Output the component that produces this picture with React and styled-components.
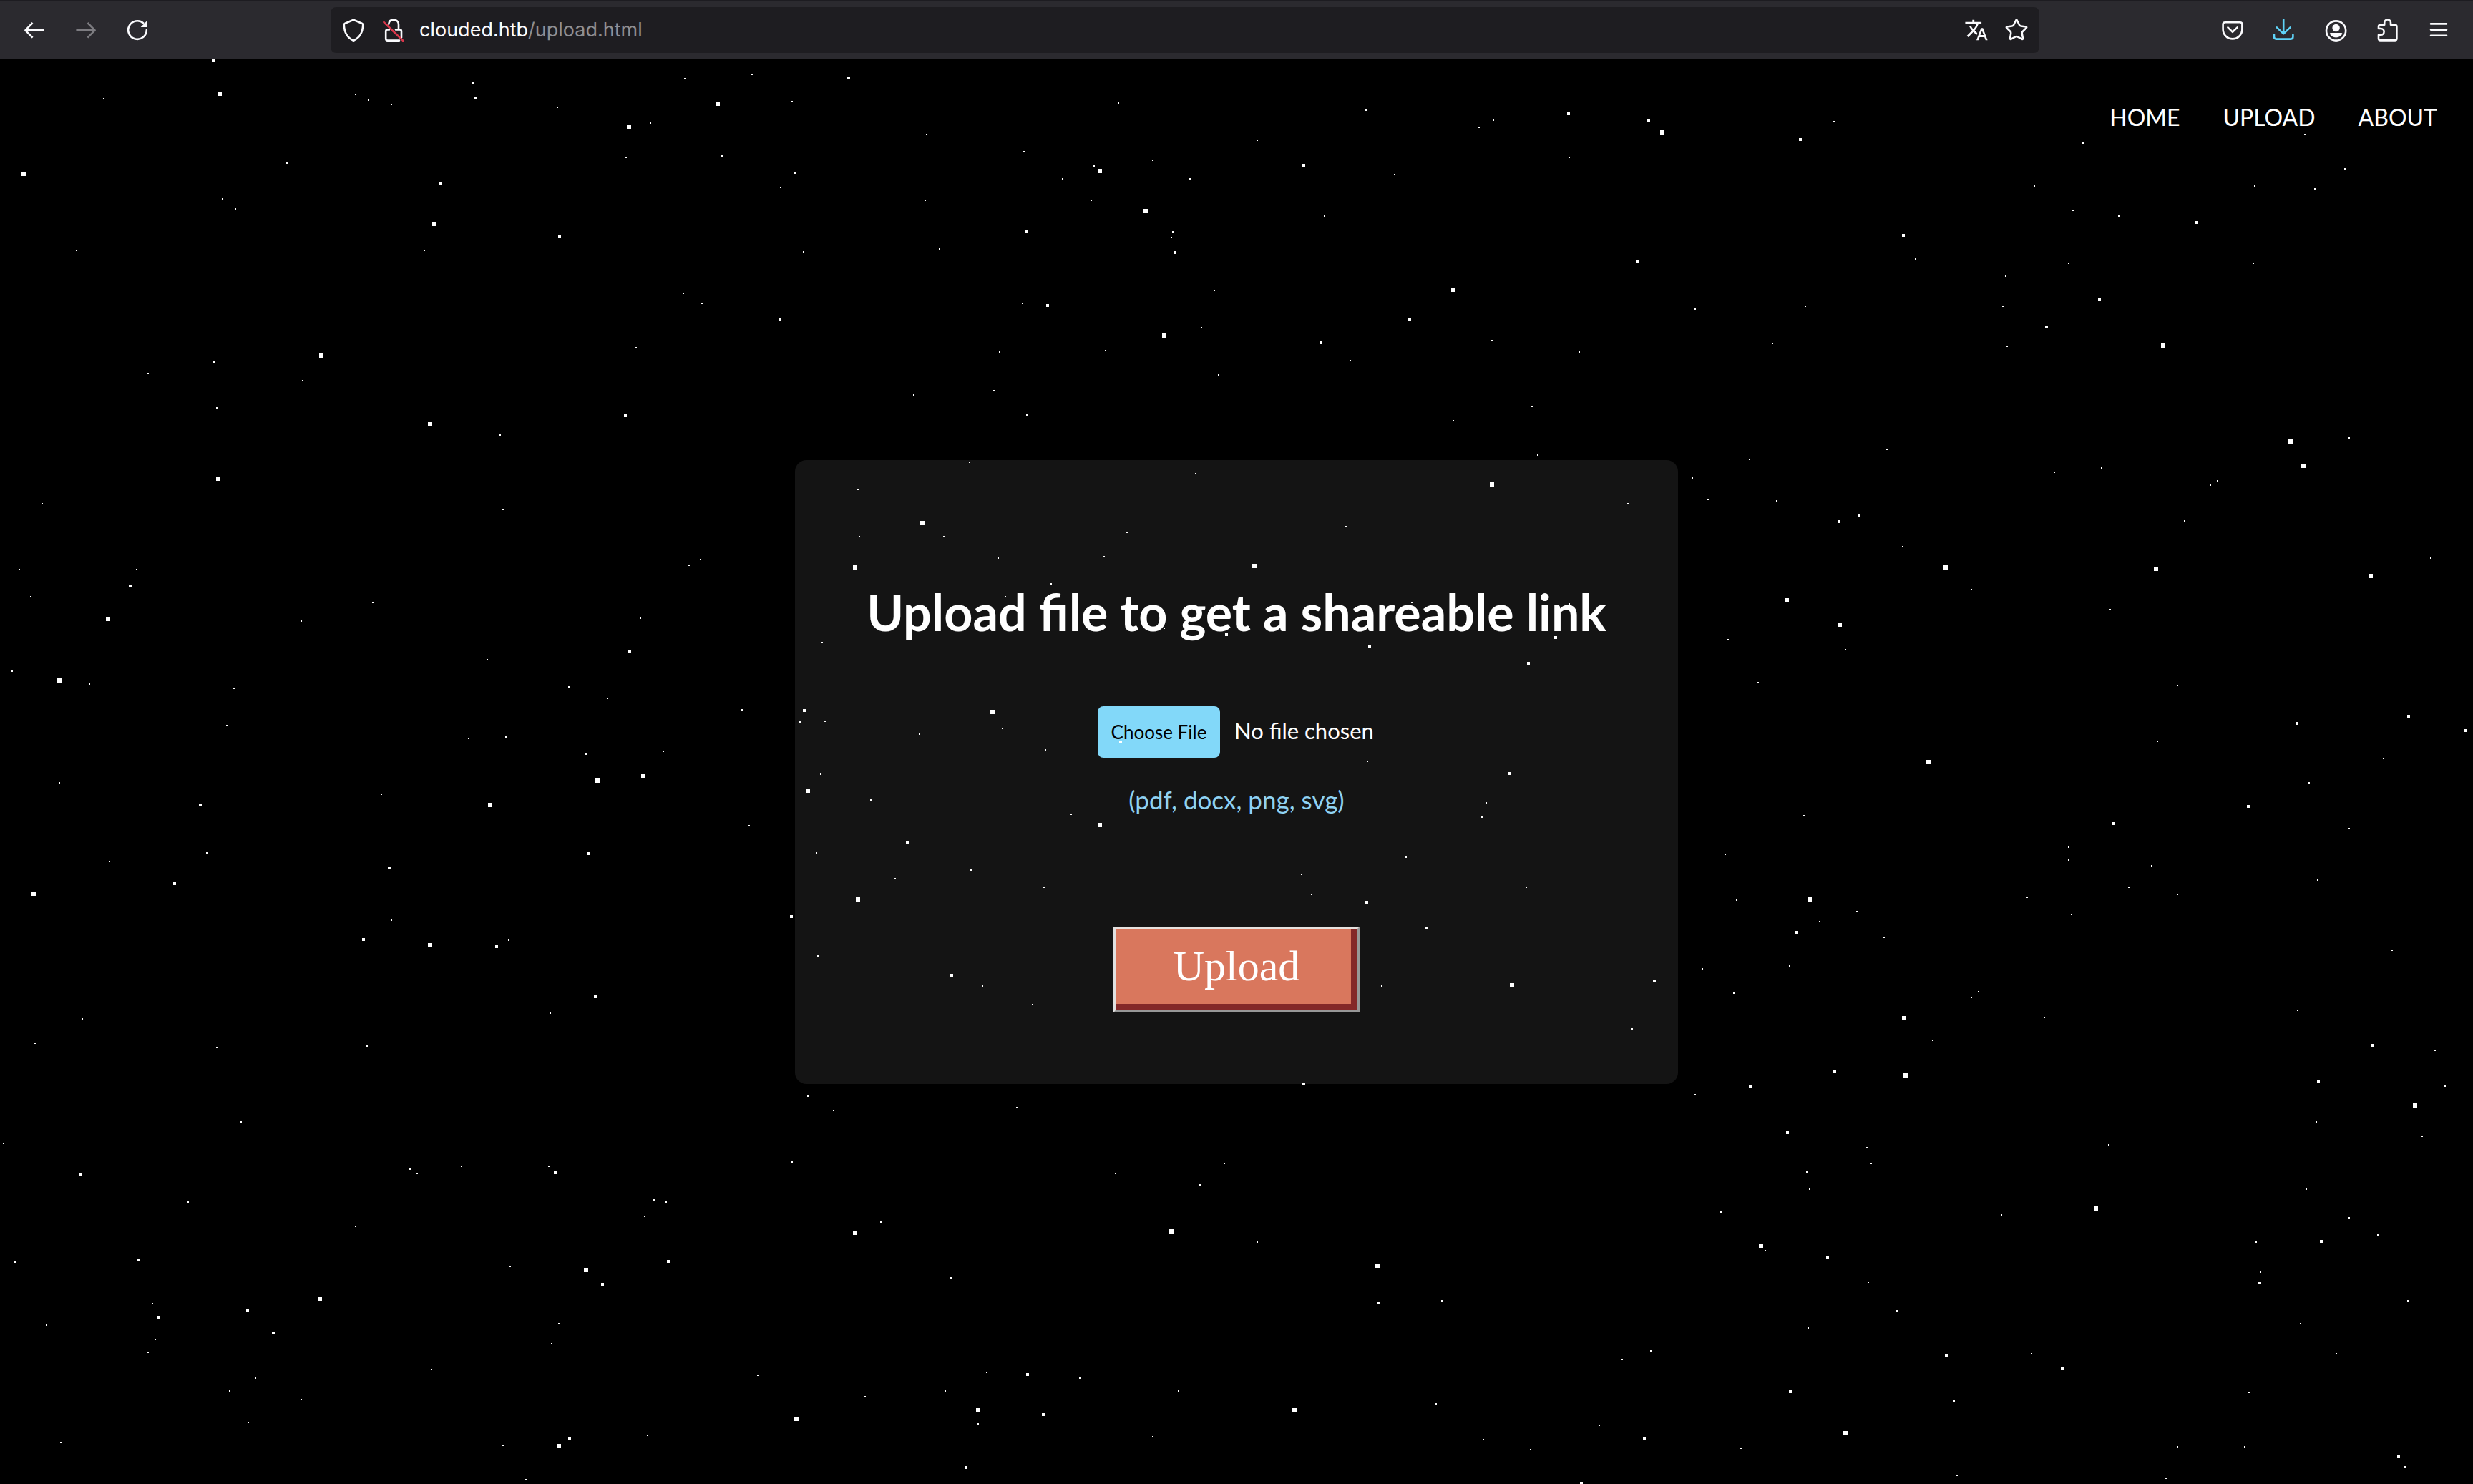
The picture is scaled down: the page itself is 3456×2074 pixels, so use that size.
import React from "react";
import styled, { createGlobalStyle } from "styled-components";
import { Star } from "lucide-react";
import { MdTranslate } from "react-icons/md";

const GlobalStyle = createGlobalStyle`
  *, *::before, *::after { box-sizing: border-box; }
  body {
    margin: 0;
    background: #000;
    color: #fff;
    font-family: Lato, "Liberation Sans", sans-serif;
  }
`;

const Screen = styled.div`
  position: relative;
  display: flex;
  flex-direction: column;
  min-height: 100vh;
`;

/* ---------- browser chrome ---------- */

const Toolbar = styled.header`
  display: flex;
  align-items: center;
  height: 83px;
  padding: 0 12px;
  background: #2b2a2f;
  border-top: 2px solid #1d1c21;
  border-bottom: 1px solid #111113;
`;

const ToolGroup = styled.div`
  display: flex;
  align-items: center;
`;

const IconButton = styled.button`
  display: flex;
  align-items: center;
  justify-content: center;
  width: ${(p) => (p.$compact ? 56 : 72)}px;
  height: 64px;
  padding: 0;
  border: 0;
  background: none;
  color: ${(p) => p.$color || "#fbfbfe"};
`;

const AddressBar = styled.div`
  flex: 1;
  display: flex;
  align-items: center;
  height: 64px;
  margin: 0 234px;
  padding: 0 4px;
  border-radius: 8px;
  background: #1e1d21;
`;

const Address = styled.div`
  flex: 1;
  padding-left: 8px;
  font-family: Inter, Roboto, sans-serif;
  font-size: 27px;
  line-height: 32px;
  color: #8f8f93;
`;

const Host = styled.span`
  color: #fbfbfe;
`;

const Glyph = styled.svg`
  width: 32px;
  height: 32px;
  overflow: visible;
  fill: none;
  stroke: currentColor;
  stroke-width: 1.3;
  stroke-linecap: round;
  stroke-linejoin: round;
`;

const Icon = ({ children }) => (
  <Glyph viewBox="0 0 16 16" aria-hidden="true">
    {children}
  </Glyph>
);

const BackIcon = () => (
  <Icon>
    <path d="M14.8 8.2H1.9M6.8 3L1.7 8.2l5.1 5.1" strokeLinecap="butt" />
  </Icon>
);
const ForwardIcon = () => (
  <Icon>
    <path d="M1.2 8.2h12.9M9.2 3l5.1 5.2-5.1 5.1" strokeLinecap="butt" />
  </Icon>
);
const ReloadIcon = () => (
  <Icon>
    <path d="M14.4 8A6.4 6.4 0 1 1 12.2 3.2" />
    <path d="M15 1.3V6h-4.7z" fill="currentColor" stroke="none" />
  </Icon>
);
const ShieldIcon = () => (
  <Icon>
    <path d="M8 .9l5.9 2.5q.7.3.7 1c-.1 4.8-2.2 9-6.6 11C3.6 13.4 1.5 9.2 1.4 4.4q0-.7.7-1z" />
  </Icon>
);
const InsecureIcon = () => (
  <Icon>
    <path d="M4.600 3.800C4.800 1.900 6.200.8 8 .8c2 0 3.500 1.400 3.500 3.400v3.500M9.500 7.700h2.800q1.200 0 1.200 1.200v4.400M5 7.700H3.800q-1.200 0-1.200 1.200v5.200q0 1.200 1.200 1.200H12" />
    <path d="M1.200 2.500l13.600 13.100" stroke="#d9374b" />
  </Icon>
);
const PocketIcon = () => (
  <Icon>
    <path d="M2.800 2.600h10.400q1.500 0 1.500 1.500v3.400a6.700 6.700 0 0 1-13.400 0V4.100q0-1.500 1.500-1.500z" />
    <path d="M4.700 6.200L8 9.400l3.300-3.200" />
  </Icon>
);
const DownloadIcon = () => (
  <Icon>
    <path d="M7.600.6v9.900M2.900 6.200l4.700 4.400 4.700-4.400M1 11.300v1.500q0 1.500 1.500 1.500h10.200q1.500 0 1.500-1.500v-1.500" />
  </Icon>
);
const AccountIcon = () => (
  <Icon>
    <circle cx="8.300" cy="8.500" r="6.800" />
    <circle cx="8.300" cy="6.500" r="2.600" fill="currentColor" stroke="none" />
    <path d="M4.500 10h7.600q.8 0 .5.800C11.900 12.300 10.300 13.200 8.300 13.200s-3.600-.9-4.300-2.400q-.3-.8.5-.8z" fill="currentColor" stroke="none" />
  </Icon>
);
const ExtensionsIcon = () => (
  <Icon>
    <path d="M2 7V5.600q0-1.200 1.200-1.200h2.900V2.900a2.200 2.200 0 0 1 4.400 0v1.500h3q1.200 0 1.200 1.200V14q0 1.200-1.200 1.200H3.200q-1.200 0-1.200-1.200v-2.600h1.600a2.200 2.200 0 0 0 0-4.400z" />
  </Icon>
);
const MenuIcon = () => (
  <Icon>
    <path d="M2.500 3.700h11M2.500 7.800h11M2.500 11.900h11" />
  </Icon>
);

/* ---------- page ---------- */

const Page = styled.div`
  flex: 1;
  display: grid;
  grid-template: 1fr / 1fr;
`;

const SiteNav = styled.nav`
  grid-area: 1 / 1;
  align-self: start;
  display: flex;
  justify-content: flex-end;
  gap: 60px;
  padding: 61px 50px 0;
`;

const NavLink = styled.a`
  font-size: 32px;
  line-height: 40px;
  color: #fff;
  text-decoration: none;
`;

const UploadCard = styled.form`
  grid-area: 1 / 1;
  place-self: center;
  display: flex;
  flex-direction: column;
  align-items: center;
  padding: 100px;
  border-radius: 16px;
  background: #141414;
`;

const Title = styled.h1`
  margin: 70px 0 90px;
  font-size: 70px;
  line-height: 84px;
  font-weight: 700;
`;

const FileInput = styled.input`
  width: 400px;
  height: 72px;
  padding-left: 6px;
  font: 31px / 1 Lato, "Liberation Sans", sans-serif;
  color: #fff;

  &::file-selector-button {
    width: 171px;
    height: 72px;
    margin: 0 20px 0 0;
    padding: 0;
    border: 0;
    border-radius: 8px;
    background: #82d8f9;
    color: #000;
    font: 26px / 72px Lato, "Liberation Sans", sans-serif;
  }
`;

const Formats = styled.label`
  margin: 34px 0 154px;
  font-size: 35px;
  line-height: 48px;
  color: #8fd2f2;
`;

const UploadButton = styled.button`
  width: 344px;
  height: 120px;
  padding: 0 0 8px;
  border: 4px solid;
  border-color: #e6e1df #979797 #979797 #e0e0e0;
  background: #d9775d;
  box-shadow: inset -8px -8px 0 #842828;
  color: #fff;
  font: 60px "Liberation Serif", serif;
`;

/* ---------- star field ---------- */

const StarCanvas = styled.svg`
  position: absolute;
  inset: 0;
  width: 100%;
  height: 100%;
  overflow: hidden;
  pointer-events: none;
  fill: #fff;
`;

// Star centres are given on a 1568-unit square grid laid over each sector.
const GRID = 1568;

const SECTORS = [
  {
    area: [0, 80, 1152, 700],
    large: [418,114, 1365,145, 1196,217, 45,365, 826,522, 611,934, 818,1149, 415,1319],
    medium: [405,11, 903,127, 838,396, 1064,562, 1483,822, 1189,1122],
    small: [197,130, 676,116, 701,134, 744,148, 899,80, 1060,157, 1302,67, 1430,54, 1506,139, 1237,206, 1190,313, 1373,309, 1512,363, 1485,407, 545,331, 423,443, 447,475, 145,605, 807,605, 1528,609, 1299,739, 1335,770, 1210,909, 407,954, 281,990, 575,1012, 412,1097, 951,1182, 80,1398, 956,1415],
  },
  {
    area: [1152, 80, 1152, 700],
    large: [524,356, 611,481, 1196,728, 646,871, 1270,1337, 186,1458],
    medium: [46,64, 1415,176, 912,338, 384,544, 667,611, 1546,638, 1113,822, 424,777, 944,893, 1568,199],
    small: [559,143, 1030,166, 1272,197, 1245,219, 194,242, 823,260, 379,295, 624,322, 513,340, 1417,313, 1084,367, 453,381, 695,381, 192,448, 507,448, 951,497, 662,546, 660,564, 219,600, 741,730, 377,770, 717,846, 333,923, 535,918, 1270,887, 1436,923, 1000,950, 750,994, 322,1044, 170,1057, 385,1120, 1346,1093, 1196,1138, 1357,1245, 276,1268, 706,1303, 64,1353, 1528,1398, 992,1469, 575,1487, 66,1501, 227,1501, 532,1563, 330,1567],
  },
  {
    area: [2304, 80, 1152, 700],
    large: [26,235, 979,902, 1221,1203, 1245,1279],
    medium: [288,257, 1042,517, 484,557, 857,759, 756,844, 400,1435, 362,1453],
    small: [352,201, 826,269, 1248,242, 1324,349, 733,403, 1152,403, 1267,412, 807,479, 894,497, 507,631, 799,645, 1150,645, 679,685, 298,779, 673,779, 88,788, 235,896, 682,905, 1332,1191, 453,1227, 192,1259, 861,1286, 771,1299, 83,1317, 1081,1326, 1068,1339, 113,1384, 243,1389, 1019,1451, 483,1532, 1487,1567],
  },
  {
    area: [0, 780, 1152, 1294],
    large: [206,103, 113,207, 1136,376, 1224,369, 1537,393, 932,418, 64,568, 818,655, 608,1254, 1115,1205, 1063,1503, 1515,1457],
    medium: [247,47, 1197,158, 1530,258, 1522,277, 381,418, 740,524, 332,551, 1119,500, 691,645, 944,658, 1132,742, 1505,607, 152,1043, 1056,1040, 1244,1087, 264,1188, 1271,1191, 1146,1229, 302,1285, 471,1273, 520,1312, 1083,1491],
    small: [36,19, 260,19, 58,65, 572,106, 709,75, 1310,12, 1332,2, 1218,102, 1564,143, 23,191, 170,213, 445,220, 431,283, 927,172, 1082,218, 1155,237, 1411,257, 891,305, 962,303, 1114,332, 1261,327, 1562,366, 113,380, 725,400, 393,499, 208,514, 1425,453, 1553,499, 744,613, 967,647, 156,780, 66,821, 1046,770, 698,826, 412,829, 1555,674, 458,955, 6,991, 780,1035, 793,1042, 878,1030, 1044,1030, 1536,911, 1506,1023, 358,1090, 1267,1090, 1226,1115, 676,1132, 28,1192, 970,1199, 290,1262, 88,1299, 295,1323, 281,1345, 1063,1296, 1049,1330, 820,1374, 486,1388, 437,1410, 572,1425, 472,1464, 115,1498, 956,1502, 1231,1485, 1441,1384, 1000,1561],
  },
  {
    area: [1100, 630, 1260, 890],
    large: [118,287, 812,284, 357,643, 544,922, 123,1104, 1260,1316],
    medium: [764,452, 1012,480, 1336,459, 1289,523, 579,717, 1256,794, 209,963, 1008,1111, 1112,1175, 286,1291],
    small: [459,327, 379,359, 656,437, 1086,374, 1359,376, 66,666, 374,683, 230,697, 449,736, 1009,764, 145,860, 494,895, 1216,867, 1208,902, 1076,1000, 320,1032, 188,1053, 447,1074, 895,1043, 912,1092, 1285,1074, 339,1318, 1033,1318, 427,1363, 1469,1423],
  },
  {
    area: [1152, 1500, 1152, 574],
    large: [58,609, 660,604, 1052,735, 293,1286, 894,1286],
    medium: [912,41, 1053,876, 386,1150, 416,1303, 1560,1395, 269,1505, 1440,1565],
    small: [17,142, 366,131, 760,344, 554,382, 714,426, 108,568, 823,644, 241,781, 1174,868, 1517,1092, 309,1142, 486,1163, 230,1213, 673,1213, 77,1234, 1163,1262, 292,1338, 624,1387, 1253,1398, 1474,1344, 1343,1437],
  },
  {
    area: [2304, 780, 1152, 1294],
    large: [565,15, 965,18, 1373,30, 263,71, 363,112, 532,345, 306,578, 486,779, 489,876, 1458,927, 851,1101, 214,1164, 374,1482],
    medium: [1445,267, 1233,279, 1554,292, 1140,420, 884,449, 280,633, 11,716, 354,868, 193,895, 264,973, 340,1183, 1377,825, 1274,885, 1279,1157, 1162,1227, 566,1351, 786,1372, 269,1411, 1426,1520],
    small: [613,53, 878,87, 151,138, 374,155, 208,211, 1005,215, 967,310, 1397,340, 1256,380, 295,436, 1332,458, 145,501, 799,489, 799,511, 956,521, 913,557, 1272,545, 167,579, 720,574, 1005,569, 804,603, 396,598, 325,615, 447,642, 1414,664, 268,690, 102,695, 162,737, 627,734, 613,744, 752,778, 1234,766, 540,817, 1495,833, 1515,894, 88,909, 1270,955, 1471,979, 415,998, 423,1025, 875,993, 300,1039, 306,1069, 1250,1069, 137,1107, 671,1112, 1332,1117, 221,1173, 1155,1158, 1387,1146, 1163,1209, 417,1226, 472,1275, 1444,1258, 303,1304, 1240,1296, 4,1342, 728,1347, 1308,1347, 581,1427, 1142,1413, 175,1507, 1005,1505, 1133,1505, 1438,1539, 586,1553, 984,1558],
  },
];

// Each layer has its own star size and vertical drift.
const LAYERS = [
  { name: "small", size: 2, drift: 1 },
  { name: "medium", size: 4, drift: 1 },
  { name: "large", size: 6, drift: 0 },
];

const snap = (value, drift) => 2 * Math.round((value - drift) / 2) + drift;

function layerPath({ name, size, drift }) {
  let d = "";
  for (const sector of SECTORS) {
    const [left, top, width, height] = sector.area;
    const points = sector[name];
    for (let i = 0; i < points.length; i += 2) {
      const x = snap(left + (points[i] * width) / GRID - size / 2, 0);
      const y = snap(top + (points[i + 1] * height) / GRID - size / 2, drift);
      d += `M${x} ${y}h${size}v${size}h-${size}z`;
    }
  }
  return d;
}

const LAYER_PATHS = LAYERS.map(layerPath);

const StarField = () => (
  <StarCanvas aria-hidden="true">
    {LAYER_PATHS.map((d, i) => (
      <path key={LAYERS[i].name} d={d} />
    ))}
  </StarCanvas>
);

export default function App() {
  return (
    <Screen>
      <GlobalStyle />
      <Toolbar>
        <ToolGroup>
          <IconButton aria-label="Back"><BackIcon /></IconButton>
          <IconButton aria-label="Forward" $color="#7d7c81"><ForwardIcon /></IconButton>
          <IconButton aria-label="Reload"><ReloadIcon /></IconButton>
        </ToolGroup>
        <AddressBar>
          <IconButton $compact aria-label="Tracking protection"><ShieldIcon /></IconButton>
          <IconButton $compact aria-label="Connection not secure"><InsecureIcon /></IconButton>
          <Address><Host>clouded.htb</Host>/upload.html</Address>
          <IconButton $compact aria-label="Translate"><MdTranslate size={34} /></IconButton>
          <IconButton $compact aria-label="Bookmark"><Star size={34} strokeWidth={1.8} /></IconButton>
        </AddressBar>
        <ToolGroup>
          <IconButton aria-label="Pocket"><PocketIcon /></IconButton>
          <IconButton aria-label="Downloads" $color="#5fd3f8"><DownloadIcon /></IconButton>
          <IconButton aria-label="Account"><AccountIcon /></IconButton>
          <IconButton aria-label="Extensions"><ExtensionsIcon /></IconButton>
          <IconButton aria-label="Menu"><MenuIcon /></IconButton>
        </ToolGroup>
      </Toolbar>
      <Page>
        <SiteNav>
          <NavLink href="#home">HOME</NavLink>
          <NavLink href="#upload">UPLOAD</NavLink>
          <NavLink href="#about">ABOUT</NavLink>
        </SiteNav>
        <UploadCard onSubmit={(e) => e.preventDefault()}>
          <Title>Upload file to get a shareable link</Title>
          <FileInput id="file" type="file" />
          <Formats htmlFor="file">(pdf, docx, png, svg)</Formats>
          <UploadButton type="submit">Upload</UploadButton>
        </UploadCard>
      </Page>
      <StarField />
    </Screen>
  );
}
